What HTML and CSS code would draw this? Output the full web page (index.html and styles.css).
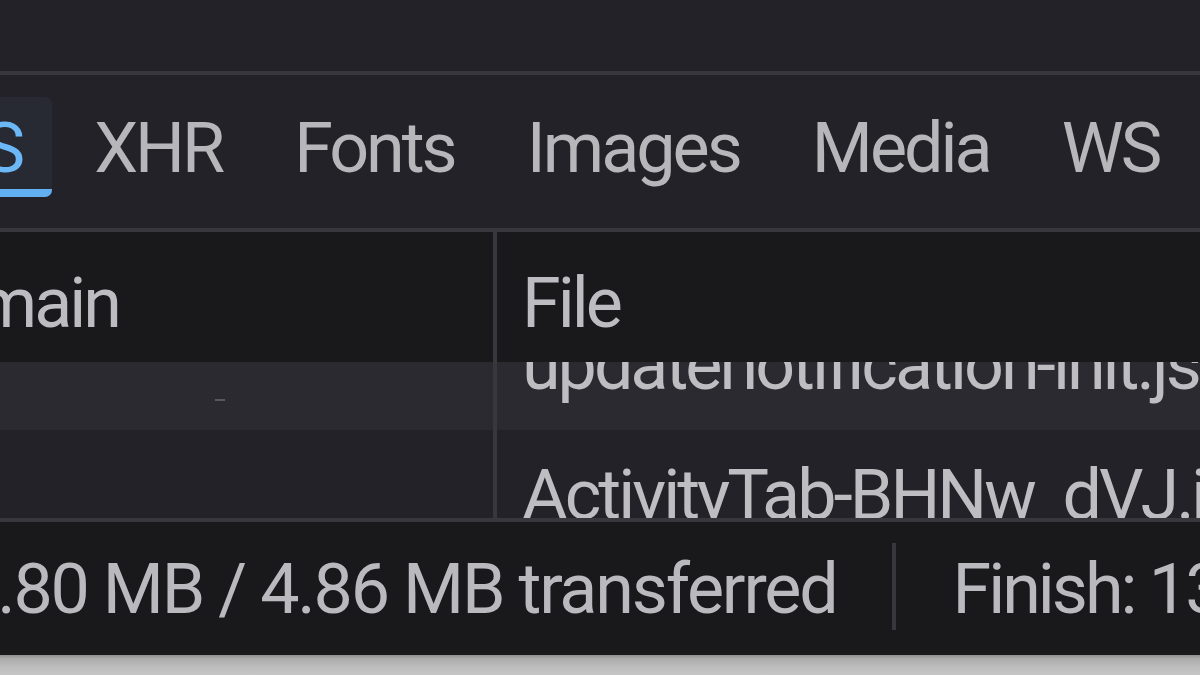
FILE: index.html
```html
<!DOCTYPE html>
<html lang="en">
<head>
<meta charset="utf-8">
<title>Network</title>
<link rel="stylesheet" href="styles.css">
</head>
<body>
<div class="devtools">
  <div class="topbar"></div>
  <div class="filters">
    <div class="filter-btn is-checked">JS</div>
    <div class="filter-btn">XHR</div>
    <div class="filter-btn">Fonts</div>
    <div class="filter-btn">Images</div>
    <div class="filter-btn">Media</div>
    <div class="filter-btn">WS</div>
    <div class="filter-btn">Other</div>
  </div>
  <div class="requests">
    <div class="thead">
      <div class="cell col-domain"><span class="domain-label">Domain</span></div>
      <div class="cell col-file">File</div>
    </div>
    <div class="tbody">
      <div class="tbody-scroll">
        <div class="row is-hovered">
          <div class="cell col-domain"><span class="dash"></span></div>
          <div class="cell col-file">updatenotification-init.js</div>
        </div>
        <div class="row">
          <div class="cell col-domain"></div>
          <div class="cell col-file">ActivityTab-BHNw_dVJ.js</div>
        </div>
      </div>
    </div>
  </div>
  <div class="statusbar">
    <div class="status-item transferred">3.80 MB / 4.86 MB transferred</div>
    <div class="status-sep"></div>
    <div class="status-item">Finish: 13.42 s</div>
  </div>
  <div class="below"></div>
</div>
</body>
</html>
```

FILE: styles.css
```css
html, body {
  margin: 0;
  padding: 0;
  width: 1200px;
  height: 675px;
  overflow: hidden;
  background: #232228;
}

.devtools {
  display: flex;
  flex-direction: column;
  width: 1200px;
  height: 675px;
  overflow: hidden;
  font-family: Roboto, "Noto Sans", sans-serif;
  font-size: 70px;
  letter-spacing: -3px;
  color: #bcbcc1;
}

.topbar {
  flex: 0 0 71px;
  background: #232228;
  border-bottom: 4px solid #38373e;
}

.filters {
  flex: 0 0 157px;
  min-height: 0;
  box-sizing: border-box;
  display: flex;
  align-items: flex-start;
  gap: 12px;
  padding-top: 22px;
  margin-left: -82px;
  background: #232228;
  border-bottom: 4px solid #38373e;
  white-space: nowrap;
}

.filter-btn {
  box-sizing: border-box;
  height: 100px;
  padding: 10px 30px 0;
  line-height: 1;
  display: flex;
  align-items: center;
  border-bottom: 8px solid transparent;
  border-radius: 7px;
  color: #b7b7bb;
}

.filter-btn.is-checked {
  background: #272a33;
  border-bottom-color: #62b0f2;
  color: #6cb8f7;
}

.requests {
  flex: 0 0 290px;
  box-sizing: border-box;
  min-height: 0;
  overflow: hidden;
  display: flex;
  flex-direction: column;
  border-bottom: 4px solid #38373e;
}

.thead {
  flex: 0 0 130px;
  display: flex;
  background: #19191c;
  line-height: 1;
}

.thead .cell {
  padding-top: 11px;
}

.cell {
  display: flex;
  align-items: center;
  overflow: hidden;
  white-space: nowrap;
  box-sizing: border-box;
}

.col-domain {
  flex: 0 0 497px;
  border-right: 4px solid #38373e;
  position: relative;
}

.col-file {
  flex: 1 1 auto;
  padding-left: 25px;
}

.domain-label {
  margin-left: -104px;
}

.tbody {
  flex: 1 1 auto;
  min-height: 0;
  overflow: hidden;
}

.tbody-scroll {
  margin-top: -62px;
}

.row {
  display: flex;
  height: 130px;
  line-height: 1;
  background: #232228;
  color: #bdbdc2;
}

.row.is-hovered {
  background: #2b2a31;
}

.dash {
  position: absolute;
  left: 215px;
  top: 99px;
  width: 10px;
  height: 2px;
  background: #5a5960;
}

.statusbar {
  flex: 0 0 133px;
  display: flex;
  align-items: center;
  background: #19191c;
  line-height: 1;
  white-space: nowrap;
  color: #b9b9be;
}

.transferred {
  margin-left: -40px;
  letter-spacing: -2.2px;
}

.status-sep {
  flex: 0 0 4px;
  height: 87px;
  margin: -4px 56px 0 56px;
  background: #38373e;
}

.below {
  flex: 1 1 auto;
  background: linear-gradient(#8e8e8e 0, #adadad 4px, #bdbdbd 12px, #c6c6c6 100%);
}
```
